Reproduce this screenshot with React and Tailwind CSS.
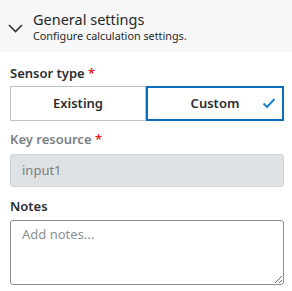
import React from "react";

export default function App() {
  return (
    <div className="w-[292px] h-[291px] bg-white text-[#1d2022]" style={{ fontFamily: '"Noto Sans", "Open Sans", sans-serif' }}>
      <div className="h-[52px] bg-[#f7f7f7] flex items-start pl-[8px] pt-[9px]">
        <svg className="mt-[15px] mr-[10px]" width="15" height="9" viewBox="0 0 15 9" fill="none">
          <path d="M1 1l6.5 6.5L14 1" stroke="#303335" strokeWidth="1.6" />
        </svg>
        <div className="flex flex-col">
          <div className="text-[14.5px] leading-[20px] text-[#25282a]">General settings</div>
          <div className="text-[10.8px] leading-[14px] text-[#25282a]">Configure calculation settings.</div>
        </div>
      </div>
      <div className="pl-[10px] pr-[8px] pt-[12px]">
        <div className="text-[13px] font-semibold leading-[18px] text-[#2a2d2f]">
          Sensor type <span className="text-[#e0201b]">*</span>
        </div>
        <div className="mt-[4px] flex h-[35px]">
          <div className="flex-1 flex items-center justify-center border border-[#bcc2c5] text-[13px] font-semibold text-[#2a2d2f]">Existing</div>
          <div className="flex-1 relative flex items-center justify-center border-2 border-[#0b6cbc] text-[13px] font-semibold text-[#2a2d2f]">
            Custom
            <svg className="absolute right-[6px] top-[9px]" width="14" height="12" viewBox="0 0 14 12" fill="none">
              <path d="M1.5 6.5l3.5 3.5L12.5 2" stroke="#1a85d6" strokeWidth="2" />
            </svg>
          </div>
        </div>
        <div className="mt-[9px] text-[13px] font-semibold leading-[18px] text-[#7a7f82]">
          Key resource <span className="text-[#e0201b]">*</span>
        </div>
        <div className="mt-[6px] h-[33px] rounded-[3px] border border-[#cfd3d6] bg-[#dfe2e4] flex items-center px-[11px] text-[13px] text-[#7a7f82]">
          input1
        </div>
        <div className="mt-[10px] text-[13px] font-semibold leading-[18px] text-[#2a2d2f]">Notes</div>
        <textarea
          className="mt-[5px] block w-full h-[65px] rounded-[3px] border border-[#8a8f92] px-[11px] py-[4px] text-[13px] placeholder:text-[#8a8f92] outline-none"
          placeholder="Add notes..."
        />
      </div>
    </div>
  );
}
